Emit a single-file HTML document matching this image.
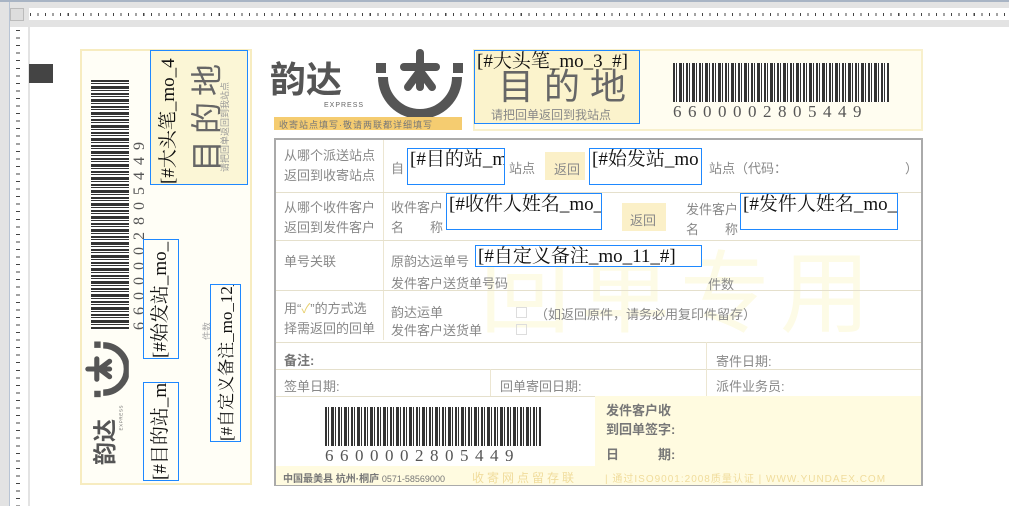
<!DOCTYPE html>
<html><head><meta charset="utf-8"><style>
*{margin:0;padding:0;box-sizing:border-box}
body{width:1009px;height:506px;overflow:hidden;background:#fff;position:relative;font-family:"Liberation Sans","Noto Sans CJK SC",sans-serif;color:#777}
.a{position:absolute}
.bl{position:absolute;border:1.5px solid #1e88ff;font-family:"Liberation Serif","Noto Serif CJK SC",serif;color:#111;font-size:19px;line-height:22px;white-space:nowrap;overflow:hidden;padding-left:2px}
.rot{position:absolute;transform-origin:0 0;transform:rotate(-90deg);white-space:nowrap}
.t{position:absolute;font-size:13px;color:#888;white-space:nowrap}
.bar{background:repeating-linear-gradient(90deg,#333 0 2px,#fff 2px 3px,#333 3px 4px,#fff 4px 6px,#333 6px 9px,#fff 9px 10px,#333 10px 11px,#fff 11px 13px)}
.barv{background:repeating-linear-gradient(180deg,#333 0 2px,#fff 2px 3px,#333 3px 4px,#fff 4px 6px,#333 6px 9px,#fff 9px 10px,#333 10px 11px,#fff 11px 13px)}
.dig{font-family:"Liberation Serif",serif;color:#555;letter-spacing:7px;font-size:17px}
.hl{position:absolute;height:1px;background:#e5e0cc}
.logo{position:absolute;width:195px;height:70px}
</style></head><body>
<!-- chrome -->
<div class="a" style="left:0;top:0;width:1009px;height:27px;background:#e3e3e3"></div>
<div class="a" style="left:29px;top:8px;width:980px;height:12px;background:#fff"></div>
<div class="a" style="left:30px;top:13px;width:975px;height:3px;background:repeating-linear-gradient(90deg,#444 0 1px,transparent 1px 7.55px)"></div>
<div class="a" style="left:0;top:0;width:10px;height:506px;background:#e3e3e3;border-right:1px solid #b8c4d4"></div>
<div class="a" style="left:10px;top:8px;width:14px;height:13px;background:#ddd;border:1px solid #bbb"></div>
<div class="a" style="left:11px;top:27px;width:17px;height:479px;background:#fff"></div>
<div class="a" style="left:16px;top:30px;width:4px;height:476px;background:repeating-linear-gradient(180deg,#444 0 1px,transparent 1px 7.55px)"></div>
<div class="a" style="left:28px;top:27px;width:2px;height:479px;background:#e3e3e3"></div>
<div class="a" style="left:0;top:0;width:1009px;height:2px;background:#a8b4c4"></div>
<!-- left black square -->
<div class="a" style="left:29px;top:64px;width:24px;height:19px;background:#444"></div>
<!-- left stub -->
<div class="a" style="left:80px;top:49px;width:172px;height:436px;border:2px solid #f7ecc0;background:#fffef6"></div>
<div class="a" style="left:150px;top:50px;width:98px;height:135px;background:#fbf6d6"></div>
<div class="a barv" style="left:91px;top:80px;width:38px;height:250px"></div>
<div class="rot dig" style="left:131px;top:330px;font-size:16px">6600002805449</div>
<div class="rot" style="left:182px;top:172px;font-size:32px;color:#666;letter-spacing:6px">目的地</div>
<div class="rot" style="left:218px;top:172px;font-size:9px;color:#999">请把回单返回到我站点</div>
<div class="logo" style="left:84px;top:465px;transform-origin:0 0;transform:rotate(-90deg) scale(.64)">
<svg width="195" height="70" viewBox="0 0 195 70"><text x="0" y="45" font-size="36" font-weight="bold" fill="#555" font-family="Noto Sans CJK SC,sans-serif">韵达</text><text x="54" y="60" font-size="7" fill="#666" font-family="Liberation Sans" letter-spacing="1">EXPRESS</text><rect x="106" y="16" width="10" height="10" fill="#555"/><rect x="183" y="16" width="10" height="10" fill="#555"/><path d="M113 30 A37 37 0 0 0 187 30" stroke="#555" stroke-width="10" fill="none"/><g stroke="#555" stroke-width="8" stroke-linecap="round"><line x1="150" y1="6" x2="150" y2="40"/><line x1="134" y1="20" x2="166" y2="20"/><line x1="150" y1="24" x2="138" y2="40"/><line x1="150" y1="24" x2="162" y2="40"/></g></svg></div>
<div class="rot" style="left:200px;top:340px;font-size:9px;color:#aaa">件数</div>
<div class="a" style="left:150px;top:50px;width:98px;height:135px;border:1.5px solid #1e88ff"></div>
<div class="rot" style="left:153px;top:184px;font-family:'Liberation Serif','Noto Serif CJK SC',serif;font-size:19px;color:#111;width:134px;overflow:hidden">[#大头笔_mo_4</div>
<div class="a" style="left:143px;top:239px;width:36px;height:120px;border:1.5px solid #1e88ff"></div>
<div class="rot" style="left:145px;top:358px;font-family:'Liberation Serif','Noto Serif CJK SC',serif;font-size:19px;color:#111;width:118px;overflow:hidden">[#始发站_mo_</div>
<div class="a" style="left:143px;top:382px;width:36px;height:99px;border:1.5px solid #1e88ff"></div>
<div class="rot" style="left:145px;top:480px;font-family:'Liberation Serif','Noto Serif CJK SC',serif;font-size:19px;color:#111;width:97px;overflow:hidden">[#目的站_m</div>
<div class="a" style="left:210px;top:284px;width:31px;height:158px;border:1.5px solid #1e88ff"></div>
<div class="rot" style="left:212px;top:441px;font-family:'Liberation Serif','Noto Serif CJK SC',serif;font-size:17px;color:#111;width:156px;overflow:hidden">[#自定义备注_mo_12_#</div>
<!-- top logo -->
<div class="logo" style="left:270px;top:47px"><svg width="195" height="70" viewBox="0 0 195 70"><text x="0" y="45" font-size="36" font-weight="bold" fill="#555" font-family="Noto Sans CJK SC,sans-serif">韵达</text><text x="54" y="60" font-size="7" fill="#666" font-family="Liberation Sans" letter-spacing="1">EXPRESS</text><rect x="106" y="16" width="10" height="10" fill="#555"/><rect x="183" y="16" width="10" height="10" fill="#555"/><path d="M113 30 A37 37 0 0 0 187 30" stroke="#555" stroke-width="10" fill="none"/><g stroke="#555" stroke-width="8" stroke-linecap="round"><line x1="150" y1="6" x2="150" y2="40"/><line x1="134" y1="20" x2="166" y2="20"/><line x1="150" y1="24" x2="138" y2="40"/><line x1="150" y1="24" x2="162" y2="40"/></g></svg></div>
<div class="a" style="left:274px;top:117px;width:188px;height:13px;background:#f5cc70"></div>
<div class="t" style="left:279px;top:118px;font-size:9px;color:#777;letter-spacing:1px">收寄站点填写·敬请两联都详细填写</div>
<!-- top yellow box -->
<div class="a" style="left:473px;top:49px;width:450px;height:82px;background:#fffdf0;border:2px solid #f8f0cc"></div>
<div class="a" style="left:475px;top:51px;width:165px;height:73px;background:#fbf3cc"></div>
<div class="t" style="left:498px;top:58px;font-size:36px;color:#666;letter-spacing:10px">目的地</div>
<div class="t" style="left:491px;top:106px;font-size:12px;color:#888">请把回单返回到我站点</div>
<div class="bl" style="left:474px;top:50px;width:166px;height:74px">[#大头笔_mo_3_#]</div>
<div class="a bar" style="left:673px;top:63px;width:216px;height:39px"></div>
<div class="t dig" style="left:673px;top:102px;font-size:17px;letter-spacing:6.5px">6600002805449</div>
<!-- form -->
<div class="a" style="left:274px;top:138px;width:649px;height:348px;border:2px solid #aaa"></div>
<div class="a" style="left:480px;top:245px;font-size:90px;color:#fdfbe6;letter-spacing:10px;line-height:100px">回单专用</div>
<div class="a" style="left:383px;top:140px;width:1px;height:200px;background:#ece6d2"></div>
<div class="hl" style="left:276px;top:192px;width:645px"></div>
<div class="hl" style="left:276px;top:240px;width:645px"></div>
<div class="hl" style="left:276px;top:290px;width:645px"></div>
<div class="hl" style="left:276px;top:342px;width:645px"></div>
<div class="hl" style="left:276px;top:369px;width:645px"></div>
<div class="hl" style="left:276px;top:396px;width:645px"></div>
<div class="a" style="left:706px;top:342px;width:1px;height:54px;background:#ece6d2"></div>
<div class="a" style="left:490px;top:369px;width:1px;height:27px;background:#ece6d2"></div>
<div class="t" style="left:284px;top:146px;line-height:20px">从哪个派送站点<br>返回到收寄站点</div>
<div class="t" style="left:391px;top:158px">自</div>
<div class="bl" style="left:407px;top:148px;width:98px;height:37px">[#目的站_m</div>
<div class="t" style="left:509px;top:158px">站点</div>
<div class="a" style="left:545px;top:152px;width:40px;height:28px;background:#fbf0c8"></div>
<div class="t" style="left:554px;top:159px">返回</div>
<div class="bl" style="left:589px;top:148px;width:113px;height:37px">[#始发站_mo</div>
<div class="t" style="left:709px;top:158px">站点（代码：</div>
<div class="t" style="left:905px;top:158px">）</div>
<div class="t" style="left:284px;top:198px;line-height:20px">从哪个收件客户<br>返回到发件客户</div>
<div class="t" style="left:391px;top:198px;line-height:20px">收件客户<br>名　　称</div>
<div class="bl" style="left:446px;top:193px;width:156px;height:37px">[#收件人姓名_mo_8_#]</div>
<div class="a" style="left:622px;top:203px;width:44px;height:28px;background:#fbf0c8"></div>
<div class="t" style="left:630px;top:210px">返回</div>
<div class="t" style="left:686px;top:200px;line-height:20px">发件客户<br>名　　称</div>
<div class="bl" style="left:740px;top:193px;width:158px;height:37px">[#发件人姓名_mo_7_#]</div>
<div class="t" style="left:284px;top:251px">单号关联</div>
<div class="t" style="left:391px;top:251px">原韵达运单号</div>
<div class="bl" style="left:475px;top:245px;width:227px;height:22px;background:#fff">[#自定义备注_mo_11_#]</div>
<div class="t" style="left:391px;top:273px">发件客户送货单号码</div>
<div class="t" style="left:708px;top:274px">件数</div>
<div class="t" style="left:284px;top:299px;line-height:20px">用“<span style="color:#e8d070">✓</span>”的方式选<br>择需返回的回单</div>
<div class="t" style="left:391px;top:302px">韵达运单</div>
<div class="t" style="left:391px;top:320px">发件客户送货单</div>
<div class="a" style="left:516px;top:307px;width:11px;height:11px;border:1px solid #ddd"></div>
<div class="a" style="left:516px;top:324px;width:11px;height:11px;border:1px solid #ddd"></div>
<div class="t" style="left:535px;top:304px">（如返回原件，请务必用复印件留存）</div>
<div class="t" style="left:284px;top:350px;font-weight:bold;color:#777">备注:</div>
<div class="t" style="left:716px;top:351px">寄件日期:</div>
<div class="t" style="left:284px;top:376px">签单日期:</div>
<div class="t" style="left:500px;top:376px">回单寄回日期:</div>
<div class="t" style="left:716px;top:376px">派件业务员:</div>
<div class="a bar" style="left:325px;top:407px;width:216px;height:39px"></div>
<div class="t dig" style="left:325px;top:446px;font-size:17px;letter-spacing:6.5px">6600002805449</div>
<div class="a" style="left:595px;top:396px;width:326px;height:70px;background:#fffbe0"></div>
<div class="t" style="left:606px;top:401px;font-weight:bold;color:#777;line-height:19px">发件客户收<br>到回单签字:</div>
<div class="t" style="left:606px;top:444px;font-weight:bold;color:#777">日　　　期:</div>
<div class="a" style="left:276px;top:466px;width:645px;height:19px;background:#fffbe0"></div>
<div class="t" style="left:283px;top:470px;font-size:10px;color:#777;font-weight:bold">中国最美县 杭州·桐庐 <span style="font-weight:normal;font-size:9px">0571-58569000</span></div>
<div class="t" style="left:472px;top:469px;font-size:12px;color:#f0dc9c;letter-spacing:3px">收寄网点留存联</div>
<div class="t" style="left:605px;top:470px;font-size:10px;color:#f0dc9c;letter-spacing:1px">| 通过ISO9001:2008质量认证 | WWW.YUNDAEX.COM</div>
</body></html>
